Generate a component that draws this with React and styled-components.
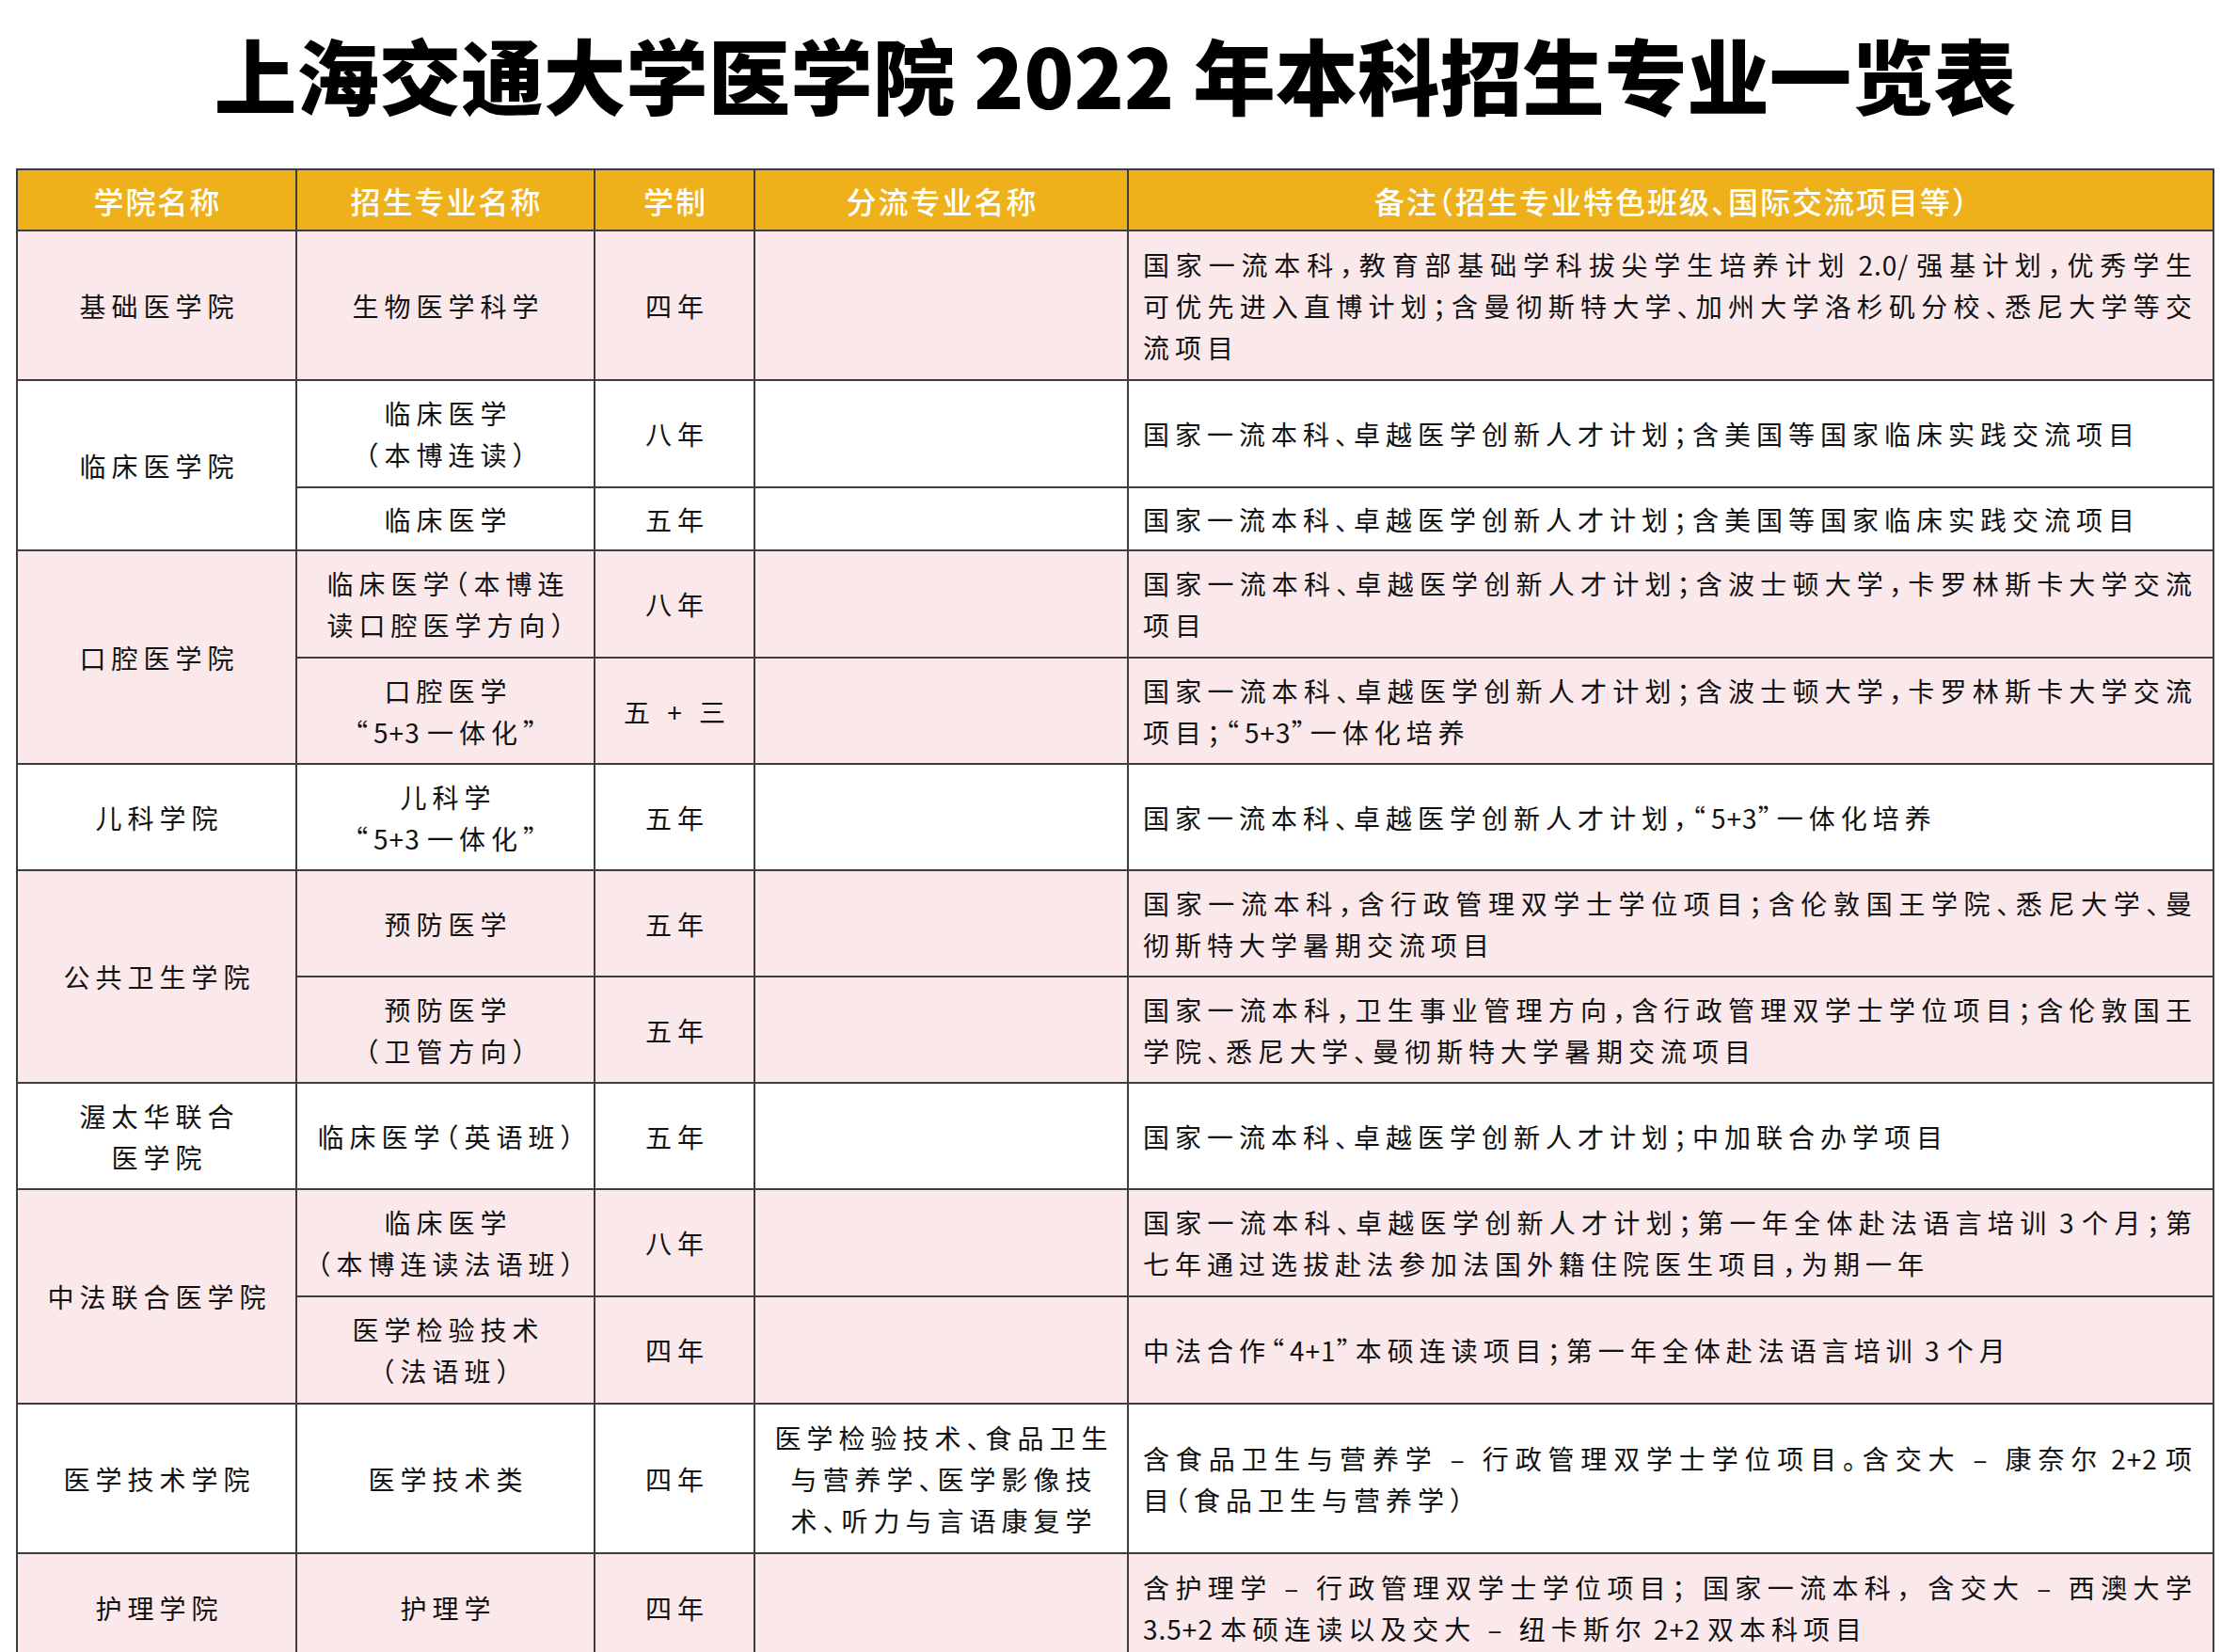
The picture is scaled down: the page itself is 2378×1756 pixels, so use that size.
import React from 'react';
import styled, { createGlobalStyle } from 'styled-components';

const GlobalStyle = createGlobalStyle`
  body {
    margin: 0;
    background: #fff;
    font-family: "Noto Sans CJK SC", "Noto Sans", sans-serif;
    color: #111;
  }
`;

const PINK = '#fbe8ea';

// each group: college name, rows of [major, years, stream, remark lines]
// a remark line ending with '|' is stretched to the full cell width
const groups = [
  {
    college: ['基础医学院'],
    pink: true,
    rows: [
      {
        major: ['生物医学科学'],
        years: '四年',
        remark: [
          '国家一流本科，教育部基础学科拔尖学生培养计划 2.0/ 强基计划，优秀学生|',
          '可优先进入直博计划；含曼彻斯特大学、加州大学洛杉矶分校、悉尼大学等交|',
          '流项目',
        ],
      },
    ],
  },
  {
    college: ['临床医学院'],
    rows: [
      {
        major: ['临床医学', '（本博连读）'],
        years: '八年',
        remark: ['国家一流本科、卓越医学创新人才计划；含美国等国家临床实践交流项目'],
      },
      {
        major: ['临床医学'],
        years: '五年',
        remark: ['国家一流本科、卓越医学创新人才计划；含美国等国家临床实践交流项目'],
      },
    ],
  },
  {
    college: ['口腔医学院'],
    pink: true,
    rows: [
      {
        major: ['临床医学（本博连', '读口腔医学方向）'],
        years: '八年',
        remark: ['国家一流本科、卓越医学创新人才计划；含波士顿大学，卡罗林斯卡大学交流|', '项目'],
      },
      {
        major: ['口腔医学', '“5+3 一体化”'],
        years: '五 + 三',
        remark: ['国家一流本科、卓越医学创新人才计划；含波士顿大学，卡罗林斯卡大学交流|', '项目；“5+3”一体化培养'],
      },
    ],
  },
  {
    college: ['儿科学院'],
    rows: [
      {
        major: ['儿科学', '“5+3 一体化”'],
        years: '五年',
        remark: ['国家一流本科、卓越医学创新人才计划，“5+3”一体化培养'],
      },
    ],
  },
  {
    college: ['公共卫生学院'],
    pink: true,
    rows: [
      {
        major: ['预防医学'],
        years: '五年',
        remark: ['国家一流本科，含行政管理双学士学位项目；含伦敦国王学院、悉尼大学、曼|', '彻斯特大学暑期交流项目'],
      },
      {
        major: ['预防医学', '（卫管方向）'],
        years: '五年',
        remark: ['国家一流本科，卫生事业管理方向，含行政管理双学士学位项目；含伦敦国王|', '学院、悉尼大学、曼彻斯特大学暑期交流项目'],
      },
    ],
  },
  {
    college: ['渥太华联合', '医学院'],
    rows: [
      {
        major: ['临床医学（英语班）'],
        years: '五年',
        remark: ['国家一流本科、卓越医学创新人才计划；中加联合办学项目'],
      },
    ],
  },
  {
    college: ['中法联合医学院'],
    pink: true,
    rows: [
      {
        major: ['临床医学', '（本博连读法语班）'],
        years: '八年',
        remark: ['国家一流本科、卓越医学创新人才计划；第一年全体赴法语言培训 3 个月；第|', '七年通过选拔赴法参加法国外籍住院医生项目，为期一年'],
      },
      {
        major: ['医学检验技术', '（法语班）'],
        years: '四年',
        remark: ['中法合作“4+1”本硕连读项目；第一年全体赴法语言培训 3 个月'],
      },
    ],
  },
  {
    college: ['医学技术学院'],
    rows: [
      {
        major: ['医学技术类'],
        years: '四年',
        stream: ['医学检验技术、食品卫生', '与营养学、医学影像技', '术、听力与言语康复学'],
        remark: ['含食品卫生与营养学 – 行政管理双学士学位项目。含交大 – 康奈尔 2+2 项|', '目（食品卫生与营养学）'],
      },
    ],
  },
  {
    college: ['护理学院'],
    pink: true,
    rows: [
      {
        major: ['护理学'],
        years: '四年',
        remark: ['含护理学 – 行政管理双学士学位项目； 国家一流本科， 含交大 – 西澳大学|', '3.5+2 本硕连读以及交大 – 纽卡斯尔 2+2 双本科项目'],
      },
    ],
  },
];

const Page = styled.div`
  padding: 0 24px 0 17px;
`;

const Title = styled.h1`
  margin: 0;
  height: 179px;
  box-sizing: border-box;
  padding-top: 34px;
  font-size: 87.5px;
  line-height: 87.5px;
  font-weight: 900;
  text-align: center;
  color: #000;
  font-feature-settings: "halt";
`;

const Table = styled.div`
  display: grid;
  width: 2337px;
  box-sizing: border-box;
  padding: 2px;
  gap: 2px;
  background: #3d3d3d;
  grid-template-columns: 295px 315px 168px 395px 1152px;
  grid-template-rows: 63px 157px 112px 65px 112px 111px 111px 111px 111px 111px 112px 112px 157px 113px;
`;

const Head = styled.div`
  background: #eeb11c;
  color: #fff;
  font-size: 32px;
  font-weight: 500;
  letter-spacing: 2px;
  display: flex;
  align-items: center;
  justify-content: center;
  padding-left: 2px;
  font-feature-settings: "halt";
`;

const Cell = styled.div`
  background: ${p => (p.$pink ? PINK : '#fff')};
  grid-row: ${p => (p.$span ? `span ${p.$span}` : 'auto')};
  display: flex;
  flex-direction: column;
  justify-content: center;
  align-items: ${p => (p.$left ? 'stretch' : 'center')};
  padding: ${p => (p.$left ? '0 16px 0 15px' : '0 0 0 6px')};
  font-size: 28px;
  line-height: 44px;
  letter-spacing: 6px;
  color: #111;
  font-feature-settings: "halt";
`;

const Line = styled.span`
  display: block;
  white-space: ${p => (p.$full ? 'normal' : 'pre')};
  text-align: ${p => (p.$full ? 'justify' : 'inherit')};
  text-align-last: ${p => (p.$full ? 'justify' : 'auto')};
`;

// number runs (2.0/, 5+3, 3.5+2) and the spaces beside them sit tighter
const Latin = styled.span`
  letter-spacing: 1px;
`;

const NUM = / ?[0-9][0-9.+/]* ?/;

const renderText = text =>
  text.split(new RegExp(`(${NUM.source})`)).map((part, i) =>
    i % 2 === 1 ? <Latin key={i}>{part}</Latin> : part
  );

const Lines = ({ lines = [] }) =>
  lines.map(l => {
    const full = l.endsWith('|');
    return (
      <Line key={l} $full={full}>
        {renderText(full ? l.slice(0, -1) : l)}
      </Line>
    );
  });

const headers = ['学院名称', '招生专业名称', '学制', '分流专业名称', '备注（招生专业特色班级、国际交流项目等）'];

export default function App() {
  return (
    <Page>
      <GlobalStyle />
      <Title>上海交通大学医学院 2022 年本科招生专业一览表</Title>
      <Table>
        {headers.map(h => (
          <Head key={h}>{h}</Head>
        ))}
        {groups.map(g => (
          <React.Fragment key={g.college.join('')}>
            <Cell $pink={g.pink} $span={g.rows.length}>
              <Lines lines={g.college} />
            </Cell>
            {g.rows.map((r, i) => (
              <React.Fragment key={i}>
                <Cell $pink={g.pink}>
                  <Lines lines={r.major} />
                </Cell>
                <Cell $pink={g.pink}>
                  <Lines lines={[r.years]} />
                </Cell>
                <Cell $pink={g.pink}>
                  <Lines lines={r.stream} />
                </Cell>
                <Cell $pink={g.pink} $left>
                  <Lines lines={r.remark} />
                </Cell>
              </React.Fragment>
            ))}
          </React.Fragment>
        ))}
      </Table>
    </Page>
  );
}
